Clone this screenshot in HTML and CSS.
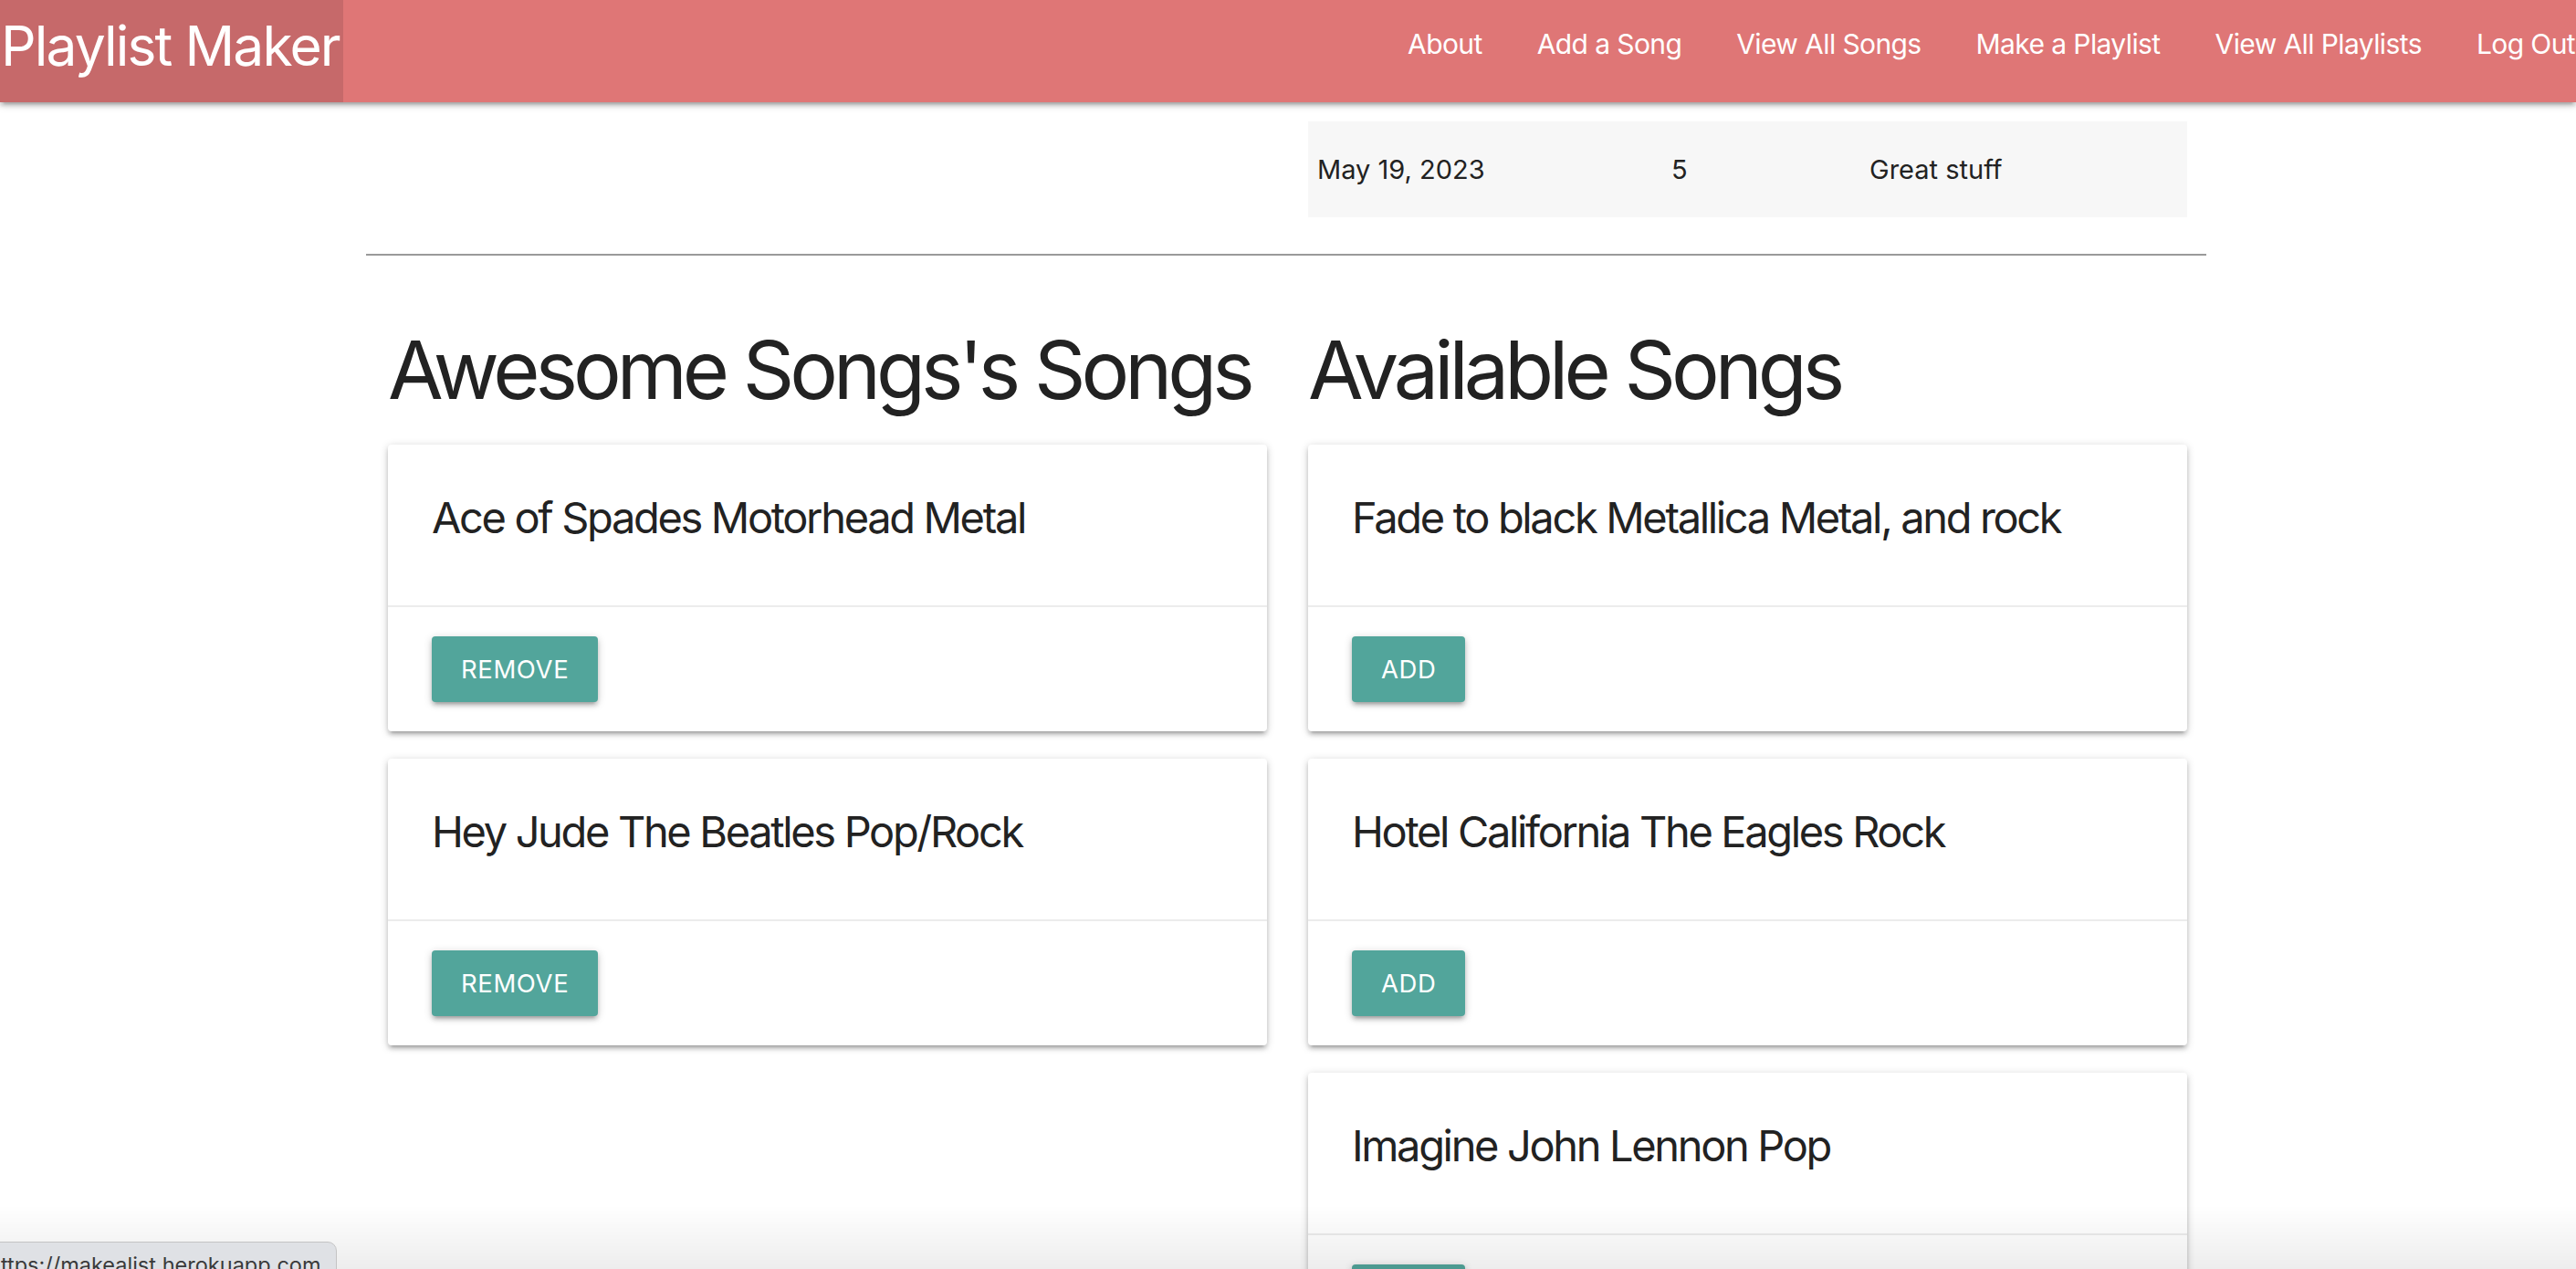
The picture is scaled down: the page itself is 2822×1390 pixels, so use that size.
FILE: index.html
```html
<!DOCTYPE html>
<html lang="en">
<head>
<meta charset="utf-8">
<title>Playlist Maker</title>
<link rel="stylesheet" href="styles.css">
</head>
<body>
<nav class="nav">
  <a class="brand" href="#">Playlist Maker</a>
  <ul class="nav-links">
    <li><a href="#">About</a></li>
    <li><a href="#">Add a Song</a></li>
    <li><a href="#">View All Songs</a></li>
    <li><a href="#">Make a Playlist</a></li>
    <li><a href="#">View All Playlists</a></li>
    <li><a href="#">Log Out</a></li>
  </ul>
</nav>

<main class="container">
  <div class="row">
    <div class="col"></div>
    <div class="col">
      <div class="review-row">
        <span class="cell c1">May 19, 2023</span>
        <span class="cell c2">5</span>
        <span class="cell c3">Great stuff</span>
      </div>
    </div>
  </div>

  <hr class="divider">

  <div class="row">
    <section class="col">
      <h3 class="heading">Awesome Songs's Songs</h3>
      <div class="card">
        <div class="card-content"><span class="card-title">Ace of Spades Motorhead Metal</span></div>
        <div class="card-action"><button class="btn">Remove</button></div>
      </div>
      <div class="card">
        <div class="card-content"><span class="card-title">Hey Jude The Beatles Pop/Rock</span></div>
        <div class="card-action"><button class="btn">Remove</button></div>
      </div>
    </section>
    <section class="col">
      <h3 class="heading">Available Songs</h3>
      <div class="card">
        <div class="card-content"><span class="card-title">Fade to black Metallica Metal, and rock</span></div>
        <div class="card-action"><button class="btn">Add</button></div>
      </div>
      <div class="card">
        <div class="card-content"><span class="card-title">Hotel California The Eagles Rock</span></div>
        <div class="card-action"><button class="btn">Add</button></div>
      </div>
      <div class="card">
        <div class="card-content"><span class="card-title">Imagine John Lennon Pop</span></div>
        <div class="card-action"><button class="btn">Add</button></div>
      </div>
    </section>
  </div>
</main>

<div class="bottom-fade"></div>
<div class="status-bubble"><span class="status-text">https://makealist.herokuapp.com</span></div>
</body>
</html>
```

FILE: styles.css
```css
html, body {
  margin: 0;
  padding: 0;
  overflow: hidden;
  background: #ffffff;
}

body {
  font-family: "Inter", "Roboto", "Liberation Sans", sans-serif;
  color: rgba(0, 0, 0, 0.87);
}

/* ---------- Navigation ---------- */
.nav {
  display: flex;
  justify-content: space-between;
  align-items: flex-start;
  height: 112px;
  background: #df7676;
  box-shadow: 0 4px 4px 0 rgba(0,0,0,0.14), 0 6px 2px -4px rgba(0,0,0,0.12), 0 2px 10px 0 rgba(0,0,0,0.2);
  position: relative;
  z-index: 2;
}

.brand {
  display: block;
  height: 112px;
  line-height: 100px;
  font-size: 60.5px;
  letter-spacing: -1.9px;
  color: #ffffff;
  text-decoration: none;
  background: #c6696a;
  padding: 0 4px 0 1px;
  white-space: nowrap;
}

.nav-links {
  display: flex;
  list-style: none;
  margin: 0 -29px 0 0;
  padding: 0;
}

.nav-links a {
  display: block;
  padding: 0 30px;
  line-height: 96px;
  font-size: 30px;
  letter-spacing: -0.6px;
  color: #ffffff;
  text-decoration: none;
  white-space: nowrap;
}

/* ---------- Layout ---------- */
.container {
  width: 2016px;
  margin-left: 401px;
}

.row {
  display: grid;
  grid-template-columns: 1008px 1008px;
}

.col {
  padding: 0 21px 0 24px;
}

/* ---------- Review table row ---------- */
.review-row {
  display: grid;
  grid-template-columns: 388px 217px 358px;
  margin-top: 21px;
  background: #f7f7f7;
  font-size: 29px;
  line-height: 45px;
  color: #222222;
}

.cell {
  padding: 30px 10px;
}

.divider {
  margin: 40px 0 0 0;
  border: 0;
  height: 2px;
  background: #9a9a9a;
}

/* ---------- Headings ---------- */
.heading {
  margin: 77px 0 33px 0;
  font-size: 88px;
  line-height: 97px;
  font-weight: 400;
  letter-spacing: -5px;
  color: #222222;
  white-space: nowrap;
}

/* ---------- Cards ---------- */
.card {
  background: #ffffff;
  border-radius: 4px;
  margin-bottom: 30px;
  box-shadow: 0 4px 4px 0 rgba(0,0,0,0.14), 0 6px 2px -4px rgba(0,0,0,0.12), 0 2px 10px 0 rgba(0,0,0,0.2);
}

.card-content {
  padding: 48px 48px 64px 48px;
}

.card-title {
  display: block;
  font-size: 47px;
  line-height: 64px;
  letter-spacing: -2.35px;
  color: #222222;
  white-space: nowrap;
}

.card-action {
  border-top: 2px solid rgba(160,160,160,0.2);
  padding: 32px 48px;
}

.btn {
  display: inline-block;
  height: 72px;
  padding: 0 32px;
  border: 0;
  border-radius: 4px;
  background: #52a59b;
  color: #ffffff;
  font-family: "Inter", "Roboto", "Liberation Sans", sans-serif;
  font-size: 27.5px;
  line-height: 72px;
  letter-spacing: 0.6px;
  text-transform: uppercase;
  box-shadow: 0 4px 4px 0 rgba(0,0,0,0.14), 0 6px 2px -4px rgba(0,0,0,0.12), 0 2px 10px 0 rgba(0,0,0,0.2);
  vertical-align: top;
}

/* ---------- Browser overlays ---------- */
.bottom-fade {
  position: fixed;
  left: 0;
  right: 0;
  bottom: 0;
  height: 70px;
  background: linear-gradient(to bottom, rgba(0,0,0,0), rgba(0,0,0,0.07));
  pointer-events: none;
  z-index: 3;
}

.status-bubble {
  position: fixed;
  left: -30px;
  top: 1360px;
  height: 44px;
  padding: 0 16px 0 16px;
  background: #dfe1e5;
  border: 1px solid #c4c4c4;
  border-radius: 0 10px 0 0;
  box-sizing: border-box;
  z-index: 4;
}

.status-text {
  display: block;
  font-size: 23.5px;
  line-height: 44px;
  padding-top: 3px;
  color: #3a3a3a;
  white-space: nowrap;
}
```
